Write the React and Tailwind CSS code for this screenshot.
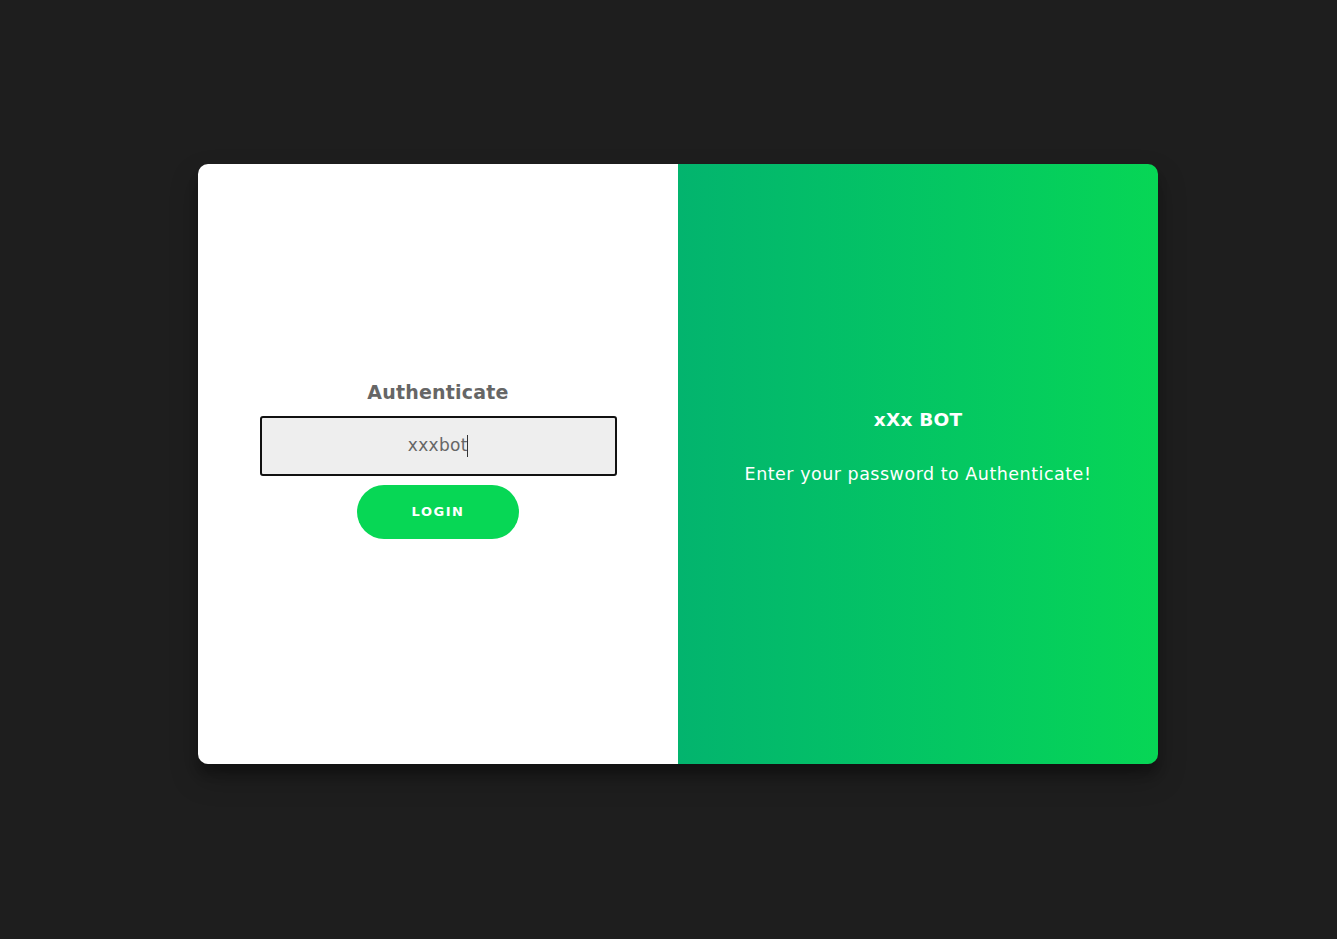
import React, { useState } from 'react';

export default function App() {
  const [password, setPassword] = useState('xxxbot');

  return (
    <div className="min-h-screen w-full bg-[#1e1e1e] flex items-center justify-center pl-[19px] pb-[12px]" style={{ fontFamily: '"DejaVu Sans", "Open Sans", sans-serif' }}>
      <div className="w-[960px] h-[600px] flex rounded-[10px] overflow-hidden shadow-[0_14px_28px_rgba(0,0,0,0.25),0_10px_10px_rgba(0,0,0,0.22)]">
        {/* left: form */}
        <div className="w-1/2 h-full bg-white flex flex-col items-center justify-center pb-[10px]">
          <h1 className="text-[19px] font-bold text-[#666] tracking-[0.2px] mb-[9px]">Authenticate</h1>
          <input
            type="password"
            value={password}
            onChange={(e) => setPassword(e.target.value)}
            className="hidden"
          />
          <div className="w-[357px] h-[60px] bg-[#eeeeee] border-2 border-[#111] rounded-[3px] flex items-center justify-center">
            <span className="text-[17px] text-[#666] tracking-[0.3px]">xxxbot</span>
            <span className="w-[1.5px] h-[22px] bg-[#333] -ml-[1px]"></span>
          </div>
          <button className="mt-[9px] w-[162px] h-[54px] rounded-full bg-[#07d755] text-white text-[13px] font-bold tracking-[1.5px]">
            LOGIN
          </button>
        </div>

        {/* right: overlay panel */}
        <div className="w-1/2 h-full bg-gradient-to-r from-[#03b46e] to-[#07d655] flex flex-col items-center justify-center text-white pb-[34px]">
          <h2 className="text-[18.5px] font-bold tracking-[0.2px]">xXx BOT</h2>
          <p className="mt-[27px] text-[17.5px] tracking-[0.5px]">Enter your password to Authenticate!</p>
        </div>
      </div>
    </div>
  );
}
